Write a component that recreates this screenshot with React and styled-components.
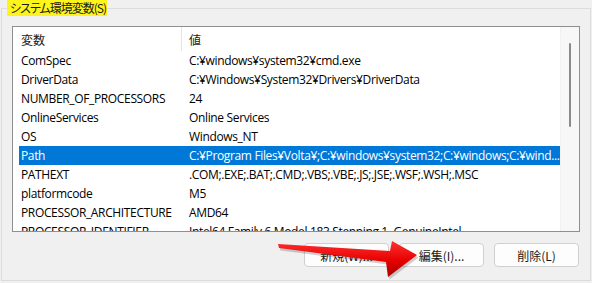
import styled, { createGlobalStyle } from 'styled-components';

const GlobalStyle = createGlobalStyle`
    html, body {
        margin: 0;
        padding: 0;
        background: #f0f0f0;
    }
    body {
        font-family: "Open Sans", "Noto Sans CJK JP", sans-serif;
        font-size: 12px;
        color: #000;
    }
`;

const Page = styled.div`
    position: relative;
    width: 592px;
    height: 283px;
    overflow: hidden;
    background: #f0f0f0;
`;

const GroupBox = styled.fieldset`
    margin: 0 1px 0 1px;
    padding: 10px 10px 11px 10px;
    border: 1px solid #dcdcdc;
    min-width: 0;
    box-sizing: border-box;
    height: 281px;
`;

const Title = styled.legend`
    margin-left: -5px;
    padding: 0 1px 0 3px;
    height: 16px;
    line-height: 16px;
    background: #fff31c;
    font-family: "Noto Sans CJK JP", sans-serif;
    font-feature-settings: "palt";
    letter-spacing: -1px;
    font-size: 12px;
    color: #1a1a1a;
`;

const ListBox = styled.div`
    display: flex;
    height: 206px;
    box-sizing: border-box;
    border: 1px solid #8f8f8f;
    background: #fff;
    overflow: hidden;
`;

const ListBody = styled.div`
    flex: 1;
    min-width: 0;
    display: flex;
    flex-direction: column;
    letter-spacing: -0.35px;
`;

const HeaderRow = styled.div`
    display: flex;
    height: 24px;
    flex-shrink: 0;
    font-family: "Noto Sans CJK JP", sans-serif;
    letter-spacing: 0;
    color: #1a1a1a;
`;

const HeaderCell = styled.div`
    display: flex;
    align-items: center;
    box-sizing: border-box;
    flex: ${(p) => (p.$first ? '0 0 169px' : '1')};
    padding-left: ${(p) => (p.$first ? '8px' : '7px')};
    border-right: ${(p) => (p.$first ? '1px solid #e5e5e5' : 'none')};
`;

const Row = styled.div`
    display: flex;
    height: 19px;
    flex-shrink: 0;
    margin-left: 6px;
    align-items: center;
    background: ${(p) => (p.$selected ? '#0078d7' : 'transparent')};
    color: ${(p) => (p.$selected ? '#fff' : '#000')};
`;

const Cell = styled.div`
    box-sizing: border-box;
    white-space: nowrap;
    overflow: hidden;
    flex: ${(p) => (p.$first ? '0 0 163px' : '1')};
    padding-left: ${(p) => (p.$first ? '2px' : '7px')};
`;

const ScrollTrack = styled.div`
    flex: 0 0 18px;
    background: #f7f7f7;
    border-left: 1px solid #f0f0f0;
    display: flex;
    justify-content: center;
`;

const ScrollThumb = styled.div`
    width: 2px;
    height: 84px;
    margin-top: 16px;
    border-radius: 1px;
    background: #8a8a8a;
`;

const ButtonRow = styled.div`
    display: flex;
    justify-content: flex-end;
    gap: 10px;
    margin-top: 11px;
    margin-right: 1px;
`;

const Button = styled.button`
    width: 85px;
    height: 24px;
    box-sizing: border-box;
    border: 1px solid #d0d0d0;
    border-radius: 4px;
    background: #fdfdfd;
    font-family: "Noto Sans CJK JP", sans-serif;
    font-size: 12px;
    color: #1a1a1a;
    padding: 0;
`;

const Arrow = styled.svg`
    position: absolute;
    left: 270px;
    top: 236px;
    width: 170px;
    height: 47px;
    overflow: visible;
`;

const vars = [
    ['ComSpec', 'C:¥windows¥system32¥cmd.exe'],
    ['DriverData', 'C:¥Windows¥System32¥Drivers¥DriverData'],
    ['NUMBER_OF_PROCESSORS', '24'],
    ['OnlineServices', 'Online Services'],
    ['OS', 'Windows_NT'],
    ['Path', 'C:¥Program Files¥Volta¥;C:¥windows¥system32;C:¥windows;C:¥wind...'],
    ['PATHEXT', '.COM;.EXE;.BAT;.CMD;.VBS;.VBE;.JS;.JSE;.WSF;.WSH;.MSC'],
    ['platformcode', 'M5'],
    ['PROCESSOR_ARCHITECTURE', 'AMD64'],
    ['PROCESSOR_IDENTIFIER', 'Intel64 Family 6 Model 183 Stepping 1, GenuineIntel'],
];

function App() {
    return (
        <Page>
            <GlobalStyle />
            <GroupBox>
                <Title>システム環境変数(S)</Title>
                <ListBox>
                    <ListBody>
                        <HeaderRow>
                            <HeaderCell $first>変数</HeaderCell>
                            <HeaderCell>値</HeaderCell>
                        </HeaderRow>
                        {vars.map(([name, value]) => (
                            <Row key={name} $selected={name === 'Path'}>
                                <Cell $first>{name}</Cell>
                                <Cell>{value}</Cell>
                            </Row>
                        ))}
                    </ListBody>
                    <ScrollTrack>
                        <ScrollThumb />
                    </ScrollTrack>
                </ListBox>
                <ButtonRow>
                    <Button>新規(W)...</Button>
                    <Button>編集(I)...</Button>
                    <Button>削除(L)</Button>
                </ButtonRow>
            </GroupBox>
            <Arrow viewBox="0 0 170 47">
                <defs>
                    <linearGradient id="arrowFill" x1="0" y1="0" x2="0" y2="1">
                        <stop offset="0" stopColor="#ff3030" />
                        <stop offset="0.55" stopColor="#e60000" />
                        <stop offset="1" stopColor="#a80000" />
                    </linearGradient>
                </defs>
                <polygon
                    points="8,9 120,16 122,6 147,20 118,42 116,27 9,13"
                    fill="#000"
                    opacity="0.18"
                    transform="translate(1.5,1.5)"
                />
                <polygon points="8,8 120,15 122,5 147,19 118,41 116,26 9,12" fill="url(#arrowFill)" />
            </Arrow>
        </Page>
    );
}

export default App;
